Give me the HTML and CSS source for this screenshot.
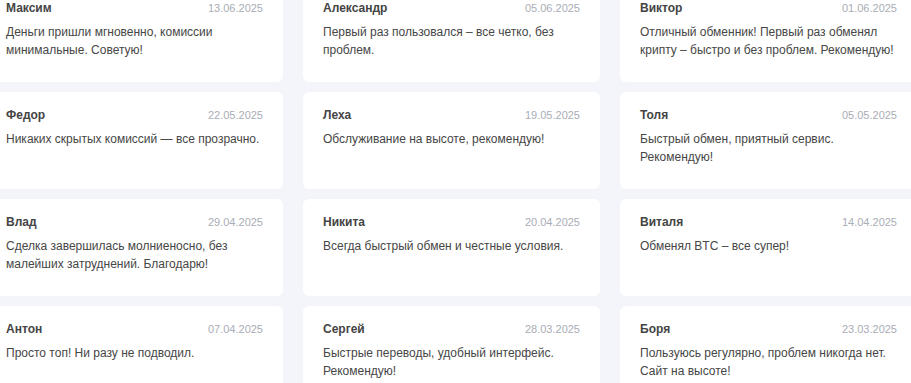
FILE: index.html
```html
<!DOCTYPE html>
<html lang="ru">
  <head>
    <meta charset="UTF-8" />
    <meta name="viewport" content="width=device-width, initial-scale=1.0" />
    <title>Отзывы</title>
    <link rel="stylesheet" href="styles.css">
  </head>
  <body>
    <main class="reviews">
      <div class="review">
        <div class="review__head">
          <p class="review__name">Максим</p>
          <p class="review__date">13.06.2025</p>
        </div>
        <p class="review__text">Деньги пришли мгновенно, комиссии минимальные. Советую!</p>
      </div>
      <div class="review">
        <div class="review__head">
          <p class="review__name">Александр</p>
          <p class="review__date">05.06.2025</p>
        </div>
        <p class="review__text">Первый раз пользовался – все четко, без проблем.</p>
      </div>
      <div class="review">
        <div class="review__head">
          <p class="review__name">Виктор</p>
          <p class="review__date">01.06.2025</p>
        </div>
        <p class="review__text">Отличный обменник! Первый раз обменял крипту – быстро и без проблем. Рекомендую!</p>
      </div>
      <div class="review">
        <div class="review__head">
          <p class="review__name">Федор</p>
          <p class="review__date">22.05.2025</p>
        </div>
        <p class="review__text">Никаких скрытых комиссий — все прозрачно.</p>
      </div>
      <div class="review">
        <div class="review__head">
          <p class="review__name">Леха</p>
          <p class="review__date">19.05.2025</p>
        </div>
        <p class="review__text">Обслуживание на высоте, рекомендую!</p>
      </div>
      <div class="review">
        <div class="review__head">
          <p class="review__name">Толя</p>
          <p class="review__date">05.05.2025</p>
        </div>
        <p class="review__text">Быстрый обмен, приятный сервис. Рекомендую!</p>
      </div>
      <div class="review">
        <div class="review__head">
          <p class="review__name">Влад</p>
          <p class="review__date">29.04.2025</p>
        </div>
        <p class="review__text">Сделка завершилась молниеносно, без малейших затруднений. Благодарю!</p>
      </div>
      <div class="review">
        <div class="review__head">
          <p class="review__name">Никита</p>
          <p class="review__date">20.04.2025</p>
        </div>
        <p class="review__text">Всегда быстрый обмен и честные условия.</p>
      </div>
      <div class="review">
        <div class="review__head">
          <p class="review__name">Виталя</p>
          <p class="review__date">14.04.2025</p>
        </div>
        <p class="review__text">Обменял BTC – все супер!</p>
      </div>
      <div class="review">
        <div class="review__head">
          <p class="review__name">Антон</p>
          <p class="review__date">07.04.2025</p>
        </div>
        <p class="review__text">Просто топ! Ни разу не подводил.</p>
      </div>
      <div class="review">
        <div class="review__head">
          <p class="review__name">Сергей</p>
          <p class="review__date">28.03.2025</p>
        </div>
        <p class="review__text">Быстрые переводы, удобный интерфейс. Рекомендую!</p>
      </div>
      <div class="review">
        <div class="review__head">
          <p class="review__name">Боря</p>
          <p class="review__date">23.03.2025</p>
        </div>
        <p class="review__text">Пользуюсь регулярно, проблем никогда нет. Сайт на высоте!</p>
      </div>
    </main>
  </body>
</html>
```

FILE: styles.css
```css
html {
  background-color: #f4f5fa;
}
body {
  margin: 0;
  height: 383px;
  overflow: hidden;
  font-family: "Liberation Sans", Arial, sans-serif;
  color: #464646;
}
p {
  margin: 0;
}
.reviews {
  display: grid;
  grid-template-columns: repeat(3, 297px);
  column-gap: 20px;
  row-gap: 10px;
  margin-left: -14px;
  margin-top: -15px;
}
.review {
  background-color: #ffffff;
  border-radius: 6px;
  padding: 15px 20px 23px;
}
.review__head {
  display: flex;
  justify-content: space-between;
  align-items: baseline;
}
.review__name {
  font-size: 12px;
  font-weight: bold;
  line-height: 16px;
  color: #444444;
}
.review__date {
  font-size: 11px;
  color: #a9adb6;
}
.review__text {
  margin-top: 7px;
  font-size: 12px;
  line-height: 18px;
}
```
